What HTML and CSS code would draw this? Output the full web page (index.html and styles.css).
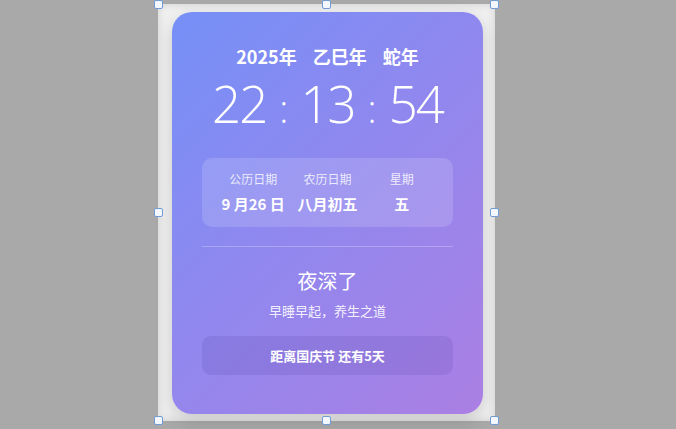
FILE: index.html
```html
<!DOCTYPE html>
<html lang="zh-CN">
<head>
<meta charset="utf-8">
<title>时钟</title>
<link rel="stylesheet" href="styles.css">
</head>
<body>
<div class="stage">
  <div class="frame">
    <div class="card">
      <div class="title">
        <span>2025年</span><span>乙巳年</span><span>蛇年</span>
      </div>
      <div class="time">
        <span class="num">22</span><span class="colon">:</span><span class="num">13</span><span class="colon">:</span><span class="num">54</span>
      </div>
      <div class="info">
        <div class="col">
          <div class="label">公历日期</div>
          <div class="value">9 月26 日</div>
        </div>
        <div class="col">
          <div class="label">农历日期</div>
          <div class="value">八月初五</div>
        </div>
        <div class="col">
          <div class="label">星期</div>
          <div class="value">五</div>
        </div>
      </div>
      <div class="divider"></div>
      <div class="greeting">夜深了</div>
      <div class="tip">早睡早起，养生之道</div>
      <div class="countdown">距离国庆节 还有5天</div>
    </div>
    <span class="handle h-tl"></span>
    <span class="handle h-tm"></span>
    <span class="handle h-tr"></span>
    <span class="handle h-ml"></span>
    <span class="handle h-mr"></span>
    <span class="handle h-bl"></span>
    <span class="handle h-bm"></span>
    <span class="handle h-br"></span>
  </div>
</div>
</body>
</html>
```

FILE: styles.css
```css
* { box-sizing: border-box; }
html, body { margin: 0; padding: 0; }
body {
  background: #a9a9a9;
  font-family: "Noto Sans CJK SC", "Noto Sans", sans-serif;
  width: 676px;
  height: 429px;
  overflow: hidden;
}
.stage {
  padding: 4px 0 0 158px;
}
.frame {
  position: relative;
  width: 337px;
  height: 417px;
  background: #f1f1f1;
  box-shadow: inset 0 0 10px rgba(0,0,0,0.14);
  padding: 8px 0 0 14px;
}
.card {
  width: 311px;
  height: 402px;
  border-radius: 20px;
  background: linear-gradient(135deg, #7590f7 0%, #8f88ef 45%, #ab7fe3 100%);
  box-shadow: 0 6px 18px rgba(0,0,0,0.16);
  color: #fff;
  padding: 32px 30px 0;
  display: flex;
  flex-direction: column;
  align-items: stretch;
}
.title {
  display: flex;
  justify-content: center;
  gap: 16px;
  font-size: 18px;
  font-weight: 700;
  line-height: 24px;
}
.time {
  display: flex;
  justify-content: center;
  align-items: baseline;
  margin-top: 7px;
  font-family: "Open Sans", sans-serif;
  font-weight: 300;
  font-size: 51px;
  line-height: 56px;
}
.time .num { letter-spacing: -2px; }
.time .colon { font-size: 38px; margin: 0 12px 0 13px; }
.info {
  margin-top: 22px;
  height: 69px;
  border-radius: 10px;
  background: rgba(255,255,255,0.15);
  display: grid;
  grid-template-columns: 1fr 1fr 1fr;
  padding: 0 14px;
  align-content: center;
  row-gap: 0;
}
.col {
  display: flex;
  flex-direction: column;
  align-items: center;
}
.label {
  font-size: 12px;
  line-height: 18px;
  color: rgba(255,255,255,0.82);
}
.value {
  font-size: 15px;
  font-weight: 700;
  line-height: 22px;
  margin-top: 5px;
  white-space: nowrap;
}
.divider {
  margin-top: 19px;
  height: 1px;
  background: rgba(255,255,255,0.25);
}
.greeting {
  margin-top: 20px;
  text-align: center;
  font-size: 20px;
  line-height: 28px;
}
.tip {
  margin-top: 7px;
  text-align: center;
  font-size: 13px;
  line-height: 18px;
  color: rgba(255,255,255,0.9);
}
.countdown {
  margin-top: 16px;
  height: 39px;
  border-radius: 9px;
  background: rgba(60,40,140,0.12);
  display: flex;
  align-items: center;
  justify-content: center;
  font-size: 13px;
  font-weight: 700;
}
.handle {
  position: absolute;
  width: 9px;
  height: 9px;
  background: #f4f8fd;
  border: 1px solid #6f9bd6;
  border-radius: 2px;
}
.h-tl { left: -4px; top: -4px; }
.h-tm { left: 164px; top: -4px; }
.h-tr { right: -4px; top: -4px; }
.h-ml { left: -4px; top: 204px; }
.h-mr { right: -4px; top: 204px; }
.h-bl { left: -4px; bottom: -4px; }
.h-bm { left: 164px; bottom: -4px; }
.h-br { right: -4px; bottom: -4px; }
```
